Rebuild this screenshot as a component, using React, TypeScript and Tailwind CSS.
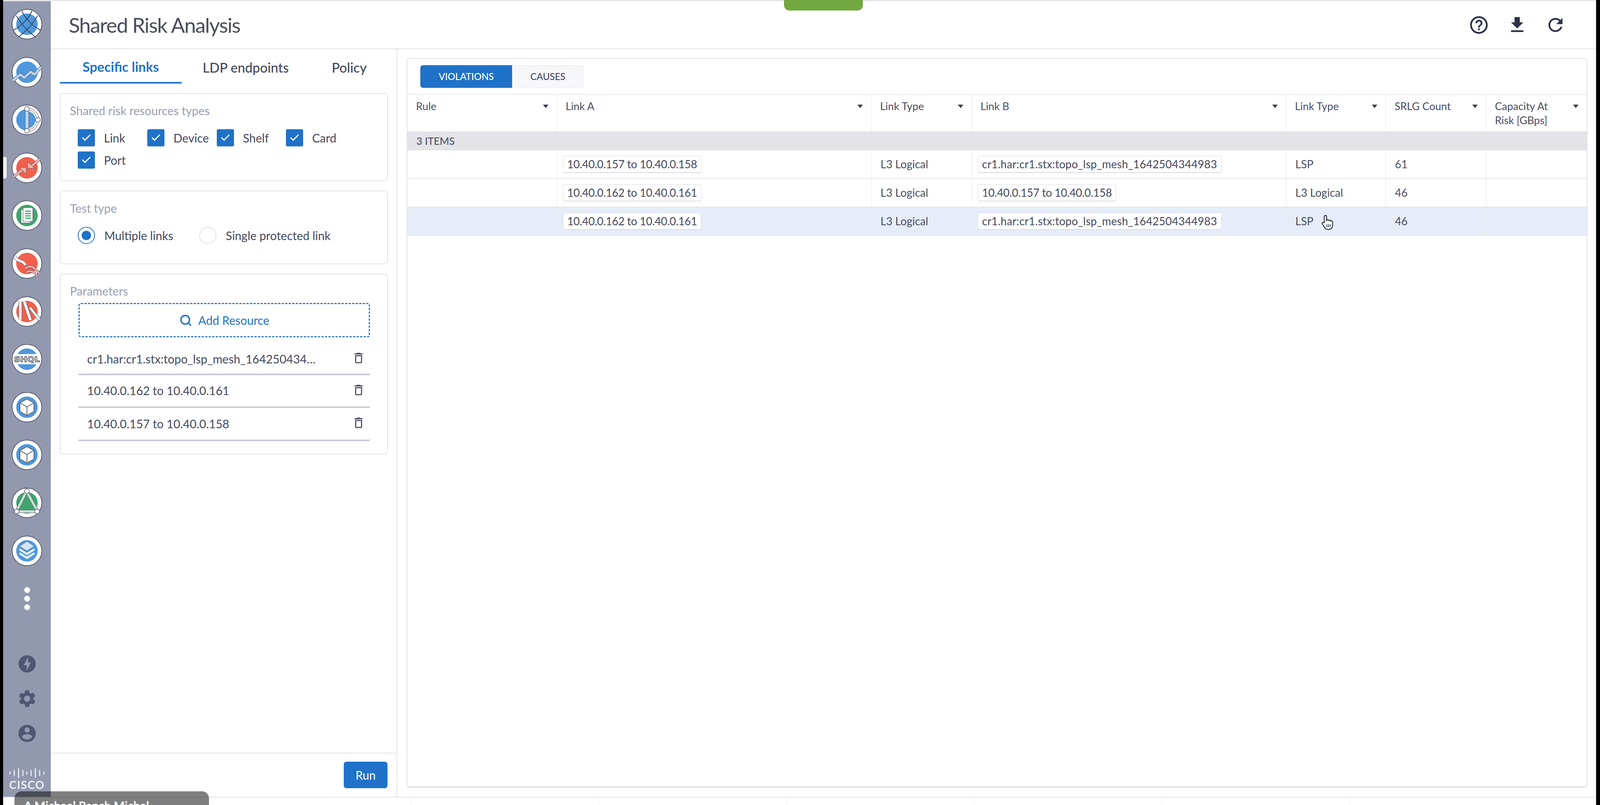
import type { ReactNode } from "react";
import { Check, Search } from "lucide-react";

const BLUE = "#4f98dd";
const RED = "#f0604d";
const GREEN = "#3fa46e";
const EDGE = "#5a5e6e";

function Disc({ fill, children }: { fill: string; children: ReactNode }) {
  return (
    <svg viewBox="0 0 80 80" className="h-[80px] w-[80px] shrink-0">
      <circle cx="40" cy="40" r="38" fill="#fff" stroke={EDGE} strokeWidth="2" />
      <circle cx="40" cy="40" r="27.5" fill={fill} />
      {children}
    </svg>
  );
}

// thick line with a darker rim, the look all the rail icons share
function Tube({ d, fill = "#fff", w = 6 }: { d: string; fill?: string; w?: number }) {
  return (
    <>
      <path d={d} fill="none" stroke={EDGE} strokeWidth={w + 2} strokeLinejoin="round" />
      <path d={d} fill="none" stroke={fill} strokeWidth={w} strokeLinejoin="round" />
    </>
  );
}

function Cube() {
  return (
    <Disc fill={BLUE}>
      <path d="M40 19l18 10v22L40 61 22 51V29z" fill="#fff" stroke={EDGE} strokeWidth="2" strokeLinejoin="round" />
      <path d="M22 29l18 10 18-10M40 39v22" fill="none" stroke={EDGE} strokeWidth="2" />
    </Disc>
  );
}

const railIcons = [
  <Disc fill={BLUE} key="topology">
    <path
      d="M13 18C25 40 45 60 62 73M27 6C35 25 55 45 74 55M67 18C55 40 35 60 18 73M53 6C45 25 25 45 6 55"
      fill="none"
      stroke="#37435f"
      strokeWidth="2"
    />
  </Disc>,
  <Disc fill={BLUE} key="trend">
    <Tube d="M4 61l19-15 10 8 17-15 9 7 17-19" fill="#b9d3ef" w={6} />
  </Disc>,
  <Disc fill={BLUE} key="paths">
    <path d="M40 12a28 28 0 0 1 0 56" fill="none" stroke="#fff" strokeWidth="12" />
    <Tube d="M40 12a28 28 0 0 1 28 28a28 28 0 0 1-28 28" w={4} />
    <Tube d="M40 12v56" fill="#b9d3ef" w={8} />
    <circle cx="40" cy="12" r="6" fill="#fff" stroke={EDGE} strokeWidth="1.5" />
    <circle cx="68" cy="40" r="6" fill="#fff" stroke={EDGE} strokeWidth="1.5" />
    <circle cx="40" cy="68" r="6" fill="#fff" stroke={EDGE} strokeWidth="1.5" />
  </Disc>,
  <Disc fill={RED} key="shared">
    <Tube d="M7 62l26-21" fill="#f6b2a8" w={5} />
    <path d="M20 39h18v17l-6-6-5-5z" fill="#f6b2a8" stroke={EDGE} strokeWidth="1" />
    <Tube d="M73 18L47 39" fill="#f6b2a8" w={5} />
    <path d="M60 41H42V24l6 6 5 5z" fill="#f6b2a8" stroke={EDGE} strokeWidth="1" />
  </Disc>,
  <Disc fill={GREEN} key="reports">
    <path d="M25 25h24v34H25z" fill="#fff" stroke={EDGE} strokeWidth="1.2" />
    <path d="M30 20h25v35H30z" fill="#fff" stroke={EDGE} strokeWidth="1.2" />
    <path d="M35 29h15M35 35h15M35 41h15M35 47h15" stroke={GREEN} strokeWidth="3" />
  </Disc>,
  <Disc fill={RED} key="flows">
    <Tube d="M8 22c10 16 22 8 28 22" w={6} />
    <Tube d="M36 52c14-10 24-2 36 14" fill="#f6b2a8" w={4} />
    <Tube d="M40 62c10-6 20 0 26 10" fill="#f6b2a8" w={4} />
  </Disc>,
  <Disc fill={RED} key="library">
    <Tube d="M23 13v48" fill="#ececec" w={7} />
    <Tube d="M33 14l16 48" fill="#f4f4f4" w={7} />
    <Tube d="M48 30l24 31" fill="#f4f4f4" w={6} />
  </Disc>,
  <Disc fill={BLUE} key="shql">
    <rect x="5" y="27" width="70" height="26" fill="#fff" />
    <text
      x="40"
      y="47"
      textAnchor="middle"
      fontFamily="'DejaVu Sans', sans-serif"
      fontWeight="700"
      fontSize="20"
      textLength="66"
      lengthAdjust="spacingAndGlyphs"
      fill="#e8e8ec"
      stroke="#4b4f5e"
      strokeWidth="1.4"
    >
      SHQL
    </text>
  </Disc>,
  <Cube key="cube-a" />,
  <Cube key="cube-b" />,
  <Disc fill={GREEN} key="triangle">
    <Tube d="M38 12L13 62H67L40 12" fill="#c7e2d0" w={6} />
    <circle cx="40" cy="10" r="6" fill="#fff" stroke={EDGE} strokeWidth="1.5" />
    <circle cx="14" cy="62" r="6" fill="#fff" stroke={EDGE} strokeWidth="1.5" />
    <circle cx="66" cy="62" r="6" fill="#fff" stroke={EDGE} strokeWidth="1.5" />
  </Disc>,
  <Disc fill={BLUE} key="layers">
    <path d="M21 28l19-12 19 12-19 12z" fill="#d4e6f7" stroke={EDGE} strokeWidth="1" />
    <path d="M21 36l19 12 19-12M21 46l19 12 19-12" fill="none" stroke="#fff" strokeWidth="5" />
  </Disc>,
];

function Glyph({ d, className }: { d: string; className: string }) {
  return (
    <svg viewBox="0 0 24 24" className={className} fill="currentColor">
      <path d={d} />
    </svg>
  );
}

function CiscoMark() {
  const bars = [8, 16, 26, 16, 8, 16, 26, 16, 8];
  return (
    <div className="flex flex-col items-center">
      <div className="flex h-[26px] w-[90px] items-center justify-between">
        {bars.map((h, i) => (
          <span key={i} className="w-[3px] rounded-full bg-[#e8e9ef]" style={{ height: h }} />
        ))}
      </div>
      <span className="mt-[1px] text-[28px] font-bold leading-[32px] tracking-[0.06em] text-[#eceef3]">CISCO</span>
    </div>
  );
}

function Sidebar() {
  return (
    <aside className="relative flex w-[122px] shrink-0 flex-col items-center bg-[#9298ae] pt-[19px]">
      <span className="absolute left-0 top-[399px] h-[55px] w-[9px] rounded-r-[4px] bg-[#eeeef1]" />
      <div className="flex flex-col gap-[42.6px]">{railIcons}</div>
      <div className="mt-[53px] flex flex-col gap-[7px]">
        <span className="h-[15px] w-[15px] rounded-full bg-white" />
        <span className="h-[15px] w-[15px] rounded-full bg-white" />
        <span className="h-[15px] w-[15px] rounded-full bg-white" />
      </div>
      <div className="mt-[111px] flex flex-col gap-[36px] text-[#505672]">
        <Glyph
          className="h-[53px] w-[53px]"
          d="M12 2.02c-5.51 0-9.98 4.47-9.98 9.98s4.47 9.98 9.98 9.98 9.98-4.47 9.98-9.98S17.51 2.02 12 2.02zM11.48 20v-6.26H8L13 4v6.26h3.35L11.48 20z"
        />
        <Glyph
          className="h-[53px] w-[53px]"
          d="M19.14 12.94c.04-.3.06-.61.06-.94 0-.32-.02-.64-.07-.94l2.03-1.58c.18-.14.23-.41.12-.61l-1.92-3.32c-.12-.22-.37-.29-.59-.22l-2.39.96c-.5-.38-1.03-.7-1.62-.94l-.36-2.54c-.04-.24-.24-.41-.48-.41h-3.84c-.24 0-.43.17-.47.41l-.36 2.54c-.59.24-1.13.57-1.62.94l-2.39-.96c-.22-.08-.47 0-.59.22L2.74 8.87c-.12.21-.08.47.12.61l2.03 1.58c-.05.3-.09.63-.09.94s.02.64.07.94l-2.03 1.58c-.18.14-.23.41-.12.61l1.92 3.32c.12.22.37.29.59.22l2.39-.96c.5.38 1.03.7 1.62.94l.36 2.54c.05.24.24.41.48.41h3.84c.24 0 .44-.17.47-.41l.36-2.54c.59-.24 1.13-.56 1.62-.94l2.39.96c.22.08.47 0 .59-.22l1.92-3.32c.12-.22.07-.47-.12-.61l-2.01-1.58zM12 15.6c-1.98 0-3.6-1.62-3.6-3.6s1.62-3.6 3.6-3.6 3.6 1.62 3.6 3.6-1.62 3.6-3.6 3.6z"
        />
        <Glyph
          className="h-[53px] w-[53px]"
          d="M12 2C6.48 2 2 6.48 2 12s4.48 10 10 10 10-4.48 10-10S17.52 2 12 2zm0 3c1.66 0 3 1.34 3 3s-1.34 3-3 3-3-1.34-3-3 1.34-3 3-3zm0 14.2c-2.5 0-4.71-1.28-6-3.22.03-1.99 4-3.08 6-3.08 1.99 0 5.97 1.09 6 3.08-1.29 1.94-3.5 3.22-6 3.22z"
        />
      </div>
      <div className="mt-[62px]">
        <CiscoMark />
      </div>
    </aside>
  );
}

function PanelCard({ title, className, children }: { title: string; className: string; children: ReactNode }) {
  return (
    <section className={`rounded-[8px] border-2 border-[#e3e3e8] pl-[24px] ${className}`}>
      <h3 className="text-[30px] font-normal leading-[32px] text-[#9a9db0]">{title}</h3>
      {children}
    </section>
  );
}

function Tick({ label, className }: { label: string; className: string }) {
  return (
    <label className={`flex h-[44px] items-center gap-[23px] ${className}`}>
      <span className="flex h-[44px] w-[44px] shrink-0 items-center justify-center rounded-[4px] bg-[#1f72c8]">
        <Check size={28} strokeWidth={2.6} className="text-white" />
      </span>
      <span className="text-[30px] text-[#45485c]">{label}</span>
    </label>
  );
}

function Radio({ label, on, className = "" }: { label: string; on?: boolean; className?: string }) {
  return (
    <label className={`flex h-[44px] items-center gap-[24px] ${className}`}>
      <span
        className={`flex h-[44px] w-[44px] shrink-0 items-center justify-center rounded-full border-2 ${
          on ? "border-[#1f72c8]" : "border-[#e2e2e7]"
        }`}
      >
        {on && <span className="h-[24px] w-[24px] rounded-full bg-[#1f72c8]" />}
      </span>
      <span className="text-[30px] text-[#45485c]">{label}</span>
    </label>
  );
}

function ResourceRow({ text, className = "" }: { text: string; className?: string }) {
  return (
    <div className={`flex h-[84.5px] items-center justify-between border-b-4 border-[#c9cad4] pl-[22px] pr-[11px] ${className}`}>
      <span className="whitespace-nowrap text-[30px] text-[#45485c]">{text}</span>
      <Glyph
        className="-mt-[4px] h-[36px] w-[36px] text-[#54566a]"
        d="M6 19c0 1.1.9 2 2 2h8c1.1 0 2-.9 2-2V7H6v12zM8 9h8v10H8V9zm7.5-5l-1-1h-5l-1 1H5v2h14V4h-3.5z"
      />
    </div>
  );
}

function LeftPanel() {
  return (
    <div className="flex w-[887px] shrink-0 flex-col border-r-2 border-[#e6e6ea]">
      <div className="flex h-[88px] pl-[23px] text-[34px]">
        <div className="flex w-[312px] items-center justify-center border-b-4 border-[#1f72c8] pt-[4px] font-bold text-[#1f72c8]">
          Specific links
        </div>
        <div className="flex w-[328px] items-center justify-center pt-[4px] font-medium text-[#45485c]">LDP endpoints</div>
        <div className="flex w-[202px] items-center justify-center pt-[4px] font-medium text-[#45485c]">Policy</div>
      </div>
      <div className="flex flex-col gap-[24px] pl-[23px] pr-[22px] pt-[24px]">
        <PanelCard title="Shared risk resources types" className="h-[226px] pt-[27px]">
          <div className="mt-[32px] flex flex-wrap gap-y-[13px] pl-[20px]">
            <Tick label="Link" className="w-[178px]" />
            <Tick label="Device" className="w-[178px]" />
            <Tick label="Shelf" className="w-[177px]" />
            <Tick label="Card" className="w-[170px]" />
            <Tick label="Port" className="w-[178px]" />
          </div>
        </PanelCard>
        <PanelCard title="Test type" className="h-[189px] pt-[27px]">
          <div className="mt-[32px] flex pl-[20px]">
            <Radio label="Multiple links" on className="w-[311px]" />
            <Radio label="Single protected link" />
          </div>
        </PanelCard>
        <PanelCard title="Parameters" className="h-[463px] pt-[26px]">
          <div className="mr-[44px] mt-[15px] flex flex-col pl-[22px]">
            <button className="flex h-[88px] items-center justify-center gap-[16px] rounded-[6px] border-[3px] border-dashed border-[#2e7cc4] text-[30px] text-[#1f72c8]">
              <Search size={33} strokeWidth={2.6} />
              Add Resource
            </button>
            <ResourceRow className="mt-[12px] pt-[6px]" text="cr1.har:cr1.stx:topo_lsp_mesh_164250434…" />
            <ResourceRow text="10.40.0.162 to 10.40.0.161" />
            <ResourceRow text="10.40.0.157 to 10.40.0.158" />
          </div>
        </PanelCard>
      </div>
      <div className="mt-auto flex h-[113px] justify-end border-t-2 border-[#e2e2e6] pr-[23px] pt-[21px]">
        <button className="h-[68px] w-[112px] rounded-[7px] bg-[#1f72c8] text-[30px] text-white">Run</button>
      </div>
    </div>
  );
}

// the two link columns take whatever width the window leaves
const GRID = "grid grid-cols-[383px_1fr_257px_1fr_255px_257px_257px]";

const headers = ["Rule", "Link A", "Link Type", "Link B", "Link Type", "SRLG Count", "Capacity At Risk [GBps]"];

const rows = [
  {
    a: "10.40.0.157 to 10.40.0.158",
    aType: "L3 Logical",
    b: "cr1.har:cr1.stx:topo_lsp_mesh_1642504344983",
    bType: "LSP",
    count: "61",
  },
  {
    a: "10.40.0.162 to 10.40.0.161",
    aType: "L3 Logical",
    b: "10.40.0.157 to 10.40.0.158",
    bType: "L3 Logical",
    count: "46",
  },
  {
    a: "10.40.0.162 to 10.40.0.161",
    aType: "L3 Logical",
    b: "cr1.har:cr1.stx:topo_lsp_mesh_1642504344983",
    bType: "LSP",
    count: "46",
    hover: true,
  },
];

function Chip({ children, wide }: { children: ReactNode; wide?: boolean }) {
  return (
    <span
      className={`inline-flex h-[44px] items-center whitespace-nowrap rounded-[4px] border border-b-2 border-[#dadbe2] bg-white px-[10px] text-[28px] text-[#45485c] ${
        wide ? "tracking-[0.01em]" : "tracking-[-0.01em]"
      }`}
    >
      {children}
    </span>
  );
}

function TextCell({ children }: { children?: ReactNode }) {
  return (
    <div className="flex items-center border-r border-[#e6e6ea] pb-[2px] pl-[23px] text-[28px] text-[#4a4d60]">
      {children}
    </div>
  );
}

function ChipCell({ children }: { children: ReactNode }) {
  return <div className="flex items-center border-r border-[#e6e6ea] pl-[15px]">{children}</div>;
}

function HandCursor() {
  return (
    <svg viewBox="0 0 24 30" className="ml-[18px] mt-[8px] h-[44px] w-[35px]">
      <path
        d="M7 15V4.5a2 2 0 0 1 4 0V12l.4-1a2 2 0 0 1 3.6.6 2 2 0 0 1 3.4.9 2 2 0 0 1 3.1 1.5V20c0 4-2.5 7-6.5 7h-2c-3 0-4.500-1.500-6-4l-3.500-5.500c-1.200-2 1.500-3.500 3-2z"
        fill="#fff"
        stroke="#33364a"
        strokeWidth="1.7"
        strokeLinejoin="round"
      />
      <path d="M11.500 18v5M14.500 18v5M17.500 18v5" stroke="#33364a" strokeWidth="1.400" />
    </svg>
  );
}

function ResultsTable() {
  return (
    <div className="flex min-w-0 flex-1 flex-col rounded-[8px] border-2 border-b-4 border-[#e3e3e8] pt-[16px]">
      <div className="ml-[33px] flex h-[58px] w-[419px] overflow-hidden rounded-[7px] text-[24px] font-medium uppercase">
        <div className="flex w-[235px] items-center justify-center bg-[#1f72c8] text-white">Violations</div>
        <div className="flex flex-1 items-center justify-center rounded-r-[7px] border border-l-0 border-[#e8e8ec] bg-[#f7f7f9] text-[#45485c]">
          Causes
        </div>
      </div>
      <div className={`${GRID} mt-[16px] h-[96px] border-t-2 border-[#e8e8ec]`}>
        {headers.map((h, i) => (
          <div key={i} className="relative border-r border-[#e6e6ea] pl-[22px] pr-[60px] pt-[11px] last:border-r-0">
            <span className="block text-[27px] leading-[36px] text-[#4a4d60]">{h}</span>
            <span className="absolute right-[21px] top-[25px] h-0 w-0 border-x-[7px] border-t-[9px] border-x-transparent border-t-[#3b3e50]" />
          </div>
        ))}
      </div>
      <div className="flex h-[48px] items-center border-y border-[#dcdce2] bg-[#e3e3e8] pl-[23px] text-[26px] font-medium uppercase text-[#4f5266]">
        3 items
      </div>
      {rows.map((row, i) => (
        <div
          key={i}
          className={`${GRID} h-[73px] border-b-2 border-[#e6e6ea] ${row.hover ? "bg-[#e6edf8]" : "bg-white"}`}
        >
          <TextCell />
          <ChipCell>
            <Chip>{row.a}</Chip>
          </ChipCell>
          <TextCell>{row.aType}</TextCell>
          <ChipCell>
            <Chip wide={row.b.startsWith("cr1")}>{row.b}</Chip>
          </ChipCell>
          <TextCell>
            {row.bType}
            {row.hover && <HandCursor />}
          </TextCell>
          <TextCell>{row.count}</TextCell>
          <div />
        </div>
      ))}
    </div>
  );
}

export default function App() {
  return (
    <div className="relative flex h-[2062px] w-full overflow-hidden bg-white font-['Lato',sans-serif]">
      <div className="w-[8px] shrink-0 bg-black" />
      <div className="flex min-w-0 flex-1 flex-col">
        <div className="h-[3px] bg-[#e8e8eb]" />
        <div className="flex h-[2040px] border-b-2 border-[#e3e3e7]">
          <Sidebar />
          <main className="flex min-w-0 flex-1 flex-col">
            <header className="flex h-[123px] shrink-0 items-center justify-between border-b-2 border-[#e2e2e6] pl-[46px] pr-[77px]">
              <h1 className="text-[53px] font-normal tracking-[-0.03em] text-[#4a4d5c]">Shared Risk Analysis</h1>
              <div className="flex gap-[44px] text-[#2d3247]">
                <Glyph
                  className="h-[54px] w-[54px]"
                  d="M11 18h2v-2h-2v2zm1-16C6.480 2 2 6.480 2 12s4.480 10 10 10 10-4.480 10-10S17.520 2 12 2zm0 18c-4.410 0-8-3.590-8-8s3.590-8 8-8 8 3.590 8 8-3.590 8-8 8zm0-14c-2.210 0-4 1.790-4 4h2c0-1.100.9-2 2-2s2 .9 2 2c0 2-3 1.750-3 5h2c0-2.250 3-2.500 3-5 0-2.210-1.790-4-4-4z"
                />
                <Glyph className="h-[54px] w-[54px]" d="M19 9h-4V3H9v6H5l7 7 7-7zM5 18v2h14v-2H5z" />
                <Glyph
                  className="h-[54px] w-[54px]"
                  d="M17.650 6.350C16.200 4.900 14.210 4 12 4c-4.420 0-7.990 3.580-7.990 8s3.570 8 7.990 8c3.730 0 6.840-2.550 7.730-6h-2.080c-.82 2.330-3.040 4-5.650 4-3.310 0-6-2.690-6-6s2.690-6 6-6c1.660 0 3.140.69 4.220 1.780L13 11h7V4l-2.350 2.350z"
                />
              </div>
            </header>
            <div className="flex min-h-0 flex-1">
              <LeftPanel />
              <div className="flex min-w-0 flex-1 pb-[23px] pl-[24px] pr-[22px] pt-[23px]">
                <ResultsTable />
              </div>
            </div>
          </main>
        </div>
        <div className="flex h-[17px] pl-[1044px]">
          <span className="flex-1 border-l border-[#e3e3e7]" />
          <span className="flex-1 border-l border-[#e3e3e7]" />
          <span className="flex-1 border-l border-[#e3e3e7]" />
          <span className="flex-1 border-l border-[#e3e3e7]" />
          <span className="flex-1 border-l border-[#e3e3e7]" />
          <span className="w-[631px] border-l border-[#e3e3e7]" />
        </div>
      </div>
      <div className="w-[10px] shrink-0 bg-black" />

      <div className="absolute left-[49%] top-0 h-[27px] w-[202px] rounded-b-[14px] bg-[#72a83f]" />
      <div className="absolute left-[37px] top-[2027px] h-[60px] w-[498px] rounded-t-[18px] bg-black/50 pl-[24px] pt-[14px] text-[30px] font-bold text-white">
        A Michael Ranch Michel
      </div>
    </div>
  );
}
